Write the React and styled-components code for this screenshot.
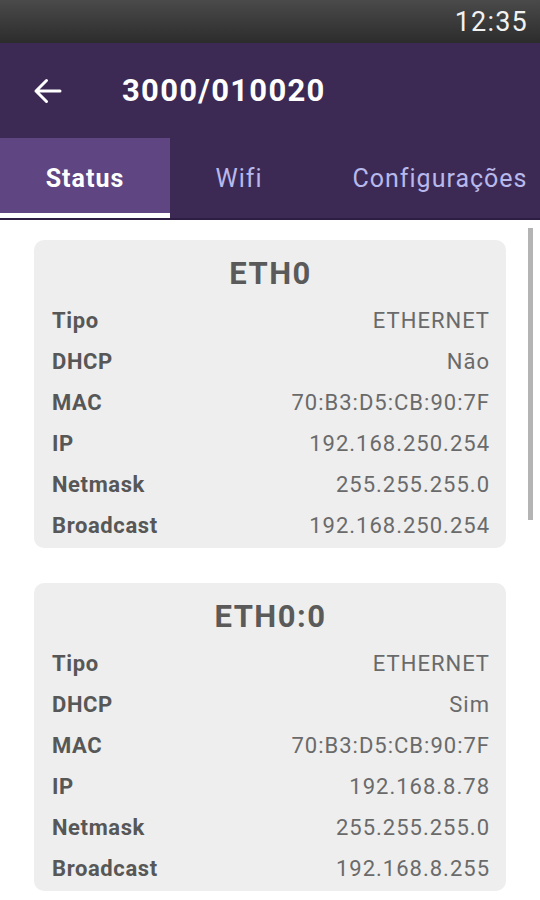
import React from "react"
import styled, { createGlobalStyle } from "styled-components"

const GlobalStyle = createGlobalStyle`
  html, body {
    margin: 0;
    padding: 0;
    background: #fff;
    overflow: hidden;
  }
  * {
    box-sizing: border-box;
  }
`

const Screen = styled.div`
  width: 540px;
  height: 900px;
  display: flex;
  flex-direction: column;
  font-family: Roboto, "Liberation Sans", sans-serif;
  background: #fff;
  overflow: hidden;
`

const StatusBar = styled.div`
  height: 43px;
  display: flex;
  align-items: center;
  justify-content: flex-end;
  padding-right: 12px;
  background: linear-gradient(#4a4a4a, #2c2c2c);
  color: #f2f2f2;
  font-size: 27px;
  letter-spacing: 1.2px;
`

const AppBar = styled.div`
  height: 95px;
  display: flex;
  align-items: center;
  padding-left: 33px;
  background-color: #3d2a54;
`

const BackButton = styled.div`
  width: 29px;
  height: 26px;
  display: flex;
  color: #fff;
`

const Title = styled.h1`
  margin: 0 0 0 60px;
  color: #fff;
  font-size: 31px;
  font-weight: 700;
  letter-spacing: 1.3px;
`

const TabBar = styled.div`
  height: 82px;
  display: flex;
  overflow: hidden;
  background-color: #3d2a54;
  border-bottom: 2px solid #2e1d42;
`

const Tab = styled.div`
  flex: 0 0 ${(p) => p.width}px;
  display: flex;
  align-items: center;
  justify-content: center;
  position: relative;
  font-size: 25px;
  letter-spacing: 1px;
  font-weight: ${(p) => (p.active ? 700 : 400)};
  color: ${(p) => (p.active ? "#fff" : "#b7b9ec")};
  background-color: ${(p) => (p.active ? "#5f4682" : "transparent")};

  &::after {
    content: "";
    display: ${(p) => (p.active ? "block" : "none")};
    position: absolute;
    left: 0;
    right: 0;
    bottom: -2px;
    height: 7px;
    background-color: #fdfdfd;
  }
`

const Content = styled.div`
  flex: 1;
  position: relative;
  display: flex;
  flex-direction: column;
  gap: 35px;
  padding: 20px 34px 0 34px;
`

const ScrollThumb = styled.div`
  position: absolute;
  top: 8px;
  right: 7px;
  width: 5px;
  height: 292px;
  background-color: #b4b4b4;
`

const Card = styled.div`
  background-color: #eeeeee;
  border-radius: 10px;
  padding: 10px 17px 2px 18px;
`

const CardTitle = styled.div`
  height: 46px;
  margin-bottom: 4px;
  display: flex;
  align-items: center;
  justify-content: center;
  color: #5a5a5a;
  font-size: 31px;
  font-weight: 700;
  letter-spacing: 1.5px;
`

const Row = styled.div`
  height: 41px;
  display: flex;
  align-items: center;
  justify-content: space-between;
  font-size: 22px;
`

const Label = styled.span`
  color: #575757;
  font-weight: 700;
  letter-spacing: 0.6px;
`

const Value = styled.span`
  color: #6a6a6a;
  letter-spacing: 1px;
  margin-right: -1px;
`

const interfaces = [
  {
    name: "ETH0",
    rows: [
      ["Tipo", "ETHERNET"],
      ["DHCP", "Não"],
      ["MAC", "70:B3:D5:CB:90:7F"],
      ["IP", "192.168.250.254"],
      ["Netmask", "255.255.255.0"],
      ["Broadcast", "192.168.250.254"],
    ],
  },
  {
    name: "ETH0:0",
    rows: [
      ["Tipo", "ETHERNET"],
      ["DHCP", "Sim"],
      ["MAC", "70:B3:D5:CB:90:7F"],
      ["IP", "192.168.8.78"],
      ["Netmask", "255.255.255.0"],
      ["Broadcast", "192.168.8.255"],
    ],
  },
]

const tabs = [
  { label: "Status", width: 170, active: true },
  { label: "Wifi", width: 138 },
  { label: "Configurações", width: 264 },
]

const App = () => {
  return (
    <Screen>
      <GlobalStyle />
      <StatusBar>12:35</StatusBar>
      <AppBar>
        <BackButton>
          <svg width="29" height="26" viewBox="0 0 29 26" fill="none">
            <path
              d="M27 13H3M13.5 2.5L3 13l10.5 10.5"
              stroke="currentColor"
              strokeWidth="3"
              strokeLinecap="round"
              strokeLinejoin="round"
            />
          </svg>
        </BackButton>
        <Title>3000/010020</Title>
      </AppBar>
      <TabBar>
        {tabs.map((t) => (
          <Tab key={t.label} width={t.width} active={t.active}>
            {t.label}
          </Tab>
        ))}
      </TabBar>
      <Content>
        <ScrollThumb />
        {interfaces.map((iface) => (
          <Card key={iface.name}>
            <CardTitle>{iface.name}</CardTitle>
            {iface.rows.map(([label, value]) => (
              <Row key={label}>
                <Label>{label}</Label>
                <Value>{value}</Value>
              </Row>
            ))}
          </Card>
        ))}
      </Content>
    </Screen>
  )
}

export default App
